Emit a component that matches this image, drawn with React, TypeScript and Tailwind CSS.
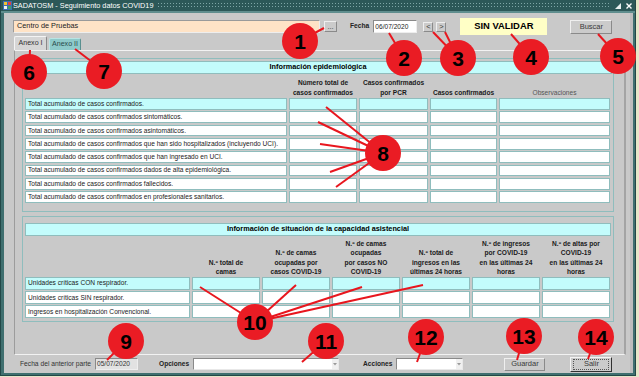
import React from "react"

const epiRows = [
  "Total acumulado de casos confirmados.",
  "Total acumulado de casos confirmados sintomáticos.",
  "Total acumulado de casos confirmados asintomáticos.",
  "Total acumulado de casos confirmados que han sido hospitalizados (incluyendo UCI).",
  "Total acumulado de casos confirmados que han ingresado en UCI.",
  "Total acumulado de casos confirmados dados de alta epidemiológica.",
  "Total acumulado de casos confirmados fallecidos.",
  "Total acumulado de casos confirmados en profesionales sanitarios.",
]

const capRows = [
  "Unidades críticas CON respirador.",
  "Unidades críticas SIN respirador.",
  "Ingresos en hospitalización Convencional.",
]

const capHeaders = [
  ["N.º total de", "camas"],
  ["N.º de camas", "ocupadas por", "casos COVID-19"],
  ["N.º de camas", "ocupadas", "por casos NO", "COVID-19"],
  ["N.º total de", "ingresos en las", "últimas 24 horas"],
  ["N.º de ingresos", "por COVID-19", "en las últimas 24", "horas"],
  ["N.º de altas por", "COVID-19", "en las últimas 24", "horas"],
]

// annotation markers: [cx, cy, label, line endpoints]
const marks: [number, number, string, [number, number][]][] = [
  [300, 41, "1", [[324, 28]]],
  [404, 58, "2", [[389, 33]]],
  [458, 58, "3", [[433, 32], [445, 32]]],
  [531, 57, "4", [[511, 34]]],
  [618, 56, "5", [[598, 34]]],
  [29, 72, "6", [[30, 50]]],
  [104, 71, "7", [[75, 49]]],
  [383, 153, "8", [[326, 107], [318, 122], [320, 144], [330, 172], [336, 187]]],
  [126, 341, "9", [[107, 360]]],
  [255, 322, "10", [[200, 287], [296, 285], [362, 287], [423, 285]]],
  [326, 341, "11", [[302, 362]]],
  [426, 337, "12", [[417, 362]]],
  [524, 336, "13", [[517, 360]]],
  [596, 337, "14", [[588, 359]]],
]

function Cell({ cyan, text }: { cyan?: boolean; text?: string }) {
  return (
    <div
      className={`h-full border border-[#8fbdbd] flex items-center pl-[2px] overflow-hidden whitespace-nowrap text-[6.6px] text-[#1a1a1a] ${
        cyan ? "bg-[#c3fcfc]" : "bg-white"
      }`}
    >
      {text}
    </div>
  )
}

function Button({ label, focused }: { label: string; focused?: boolean }) {
  return (
    <div
      className={`h-full bg-[#cbcbcb] border flex items-center justify-center text-[7.5px] text-[#3a3a3a] ${
        focused
          ? "border-t-[#f4f4f4] border-l-[#f4f4f4] border-r-[#303030] border-b-[#303030]"
          : "border-t-[#efefef] border-l-[#efefef] border-r-[#8a8a8a] border-b-[#8a8a8a]"
      }`}
    >
      <div className={`px-[4px] ${focused ? "border border-dotted border-[#555] w-[36px] h-[11px] flex items-center justify-center" : ""}`}>
        {label}
      </div>
    </div>
  )
}

function Select({ w }: { w: string }) {
  return (
    <div className={`${w} h-[12px] bg-white border border-t-[#8a8a8a] border-l-[#8a8a8a] border-r-[#e8e8e8] border-b-[#e8e8e8] flex justify-end`}>
      <div className="w-[6px] h-full bg-[#f0f0f0] flex items-center justify-center">
        <svg width="4" height="3" viewBox="0 0 4 3">
          <path d="M0 0h4L2 2.5z" fill="#9a9a9a" />
        </svg>
      </div>
    </div>
  )
}

export default function App() {
  return (
    <div className="relative w-[639px] h-[377px] overflow-hidden bg-[#e6e6c8] font-['Liberation_Sans',Arial,sans-serif]">
      {/* Window */}
      <div className="w-[636px] h-[376px] flex flex-col bg-[#3f6f6f] border-l-[1px] border-r-[1px] border-b-[1px] border-[#234848]">
        {/* Title bar */}
        <div className="h-[11px] flex items-center bg-[#2c5858]">
          <svg width="9" height="9" viewBox="0 0 9 9" className="ml-[2px] mr-[1px]">
            <rect x="0" y="0" width="9" height="9" fill="#3b6fb0" />
            <rect x="1" y="1" width="3" height="3" fill="#f2c230" />
            <rect x="5" y="1" width="3" height="3" fill="#e04040" />
            <rect x="1" y="5" width="3" height="3" fill="#f0f0f0" />
            <rect x="5" y="5" width="3" height="3" fill="#40a060" />
          </svg>
          <span className="text-[7.3px] text-white whitespace-nowrap leading-none">SADATOSM - Seguimiento datos COVID19</span>
          <div className="flex-1 h-[7px] mx-[4px] bg-[radial-gradient(circle,#7ea6a6_0.6px,transparent_0.9px)] bg-[length:3px_3px]" />
          <svg width="8" height="8" viewBox="0 0 8 8" className="mr-[3px]">
            <path d="M1 7h6V1z" fill="#e8f0f0" />
          </svg>
          <svg width="8" height="8" viewBox="0 0 8 8" className="mr-[2px]">
            <path d="M1.5 1.5l5 5M6.5 1.5l-5 5" stroke="#ffffff" strokeWidth="1.4" />
          </svg>
        </div>
        <div className="h-[2px] bg-[#5f8e8e]" />

        {/* Content */}
        <div className="flex-1 flex flex-col ml-[3px] mr-[2px] mb-[2px] bg-[#c9c9c9] border-r-[3px] border-[#bdbdbd]">
          {/* Top row */}
          <div className="h-[17px] mt-[5px] flex items-center">
            <div className="ml-[9px] w-[307px] h-[13px] bg-[#ffe3c6] border border-t-[#9a9a9a] border-l-[#9a9a9a] border-r-[#eeeeee] border-b-[#eeeeee] flex items-center pl-[3px] text-[7.3px] text-[#222]">
              Centro de Pruebas
            </div>
            <div className="ml-[4px] w-[13px] h-[11px]">
              <Button label="..." />
            </div>
            <span className="ml-[13px] text-[6.7px] font-bold text-[#222]">Fecha</span>
            <div className="ml-[4px] w-[44px] h-[13px] bg-white border border-t-[#8a8a8a] border-l-[#8a8a8a] border-r-[#eeeeee] border-b-[#eeeeee] flex items-center pl-[1px] text-[6.6px] text-[#222]">
              06/07/2020
            </div>
            <div className="ml-[6px] w-[10px] h-[10px]">
              <Button label="<" />
            </div>
            <div className="ml-[3px] w-[10px] h-[10px]">
              <Button label=">" />
            </div>
            <div className="ml-[14px] w-[87px] h-[17px] bg-[#ffffc6] flex items-center justify-center text-[9.4px] font-bold text-black">
              SIN VALIDAR
            </div>
            <div className="ml-[23px] w-[42px] h-[14px]">
              <Button label="Buscar" />
            </div>
          </div>

          {/* Tabs */}
          <div className="h-[14px] mt-[1px] flex items-end pl-[10px]">
            <div className="w-[33px] h-[14px] bg-[#d6d6d6] border border-b-0 border-t-[#f4f4f4] border-l-[#f4f4f4] border-r-[#8a8a8a] rounded-t-[2px] flex items-center justify-center text-[7.1px] text-[#333]">
              Anexo I
            </div>
            <div className="ml-[2px] w-[32px] h-[12px] bg-[#8ecaca] border border-b-0 border-t-[#b8e4e4] border-l-[#b8e4e4] border-r-[#5a9090] rounded-t-[2px] flex items-center justify-center text-[7.1px] text-[#2a4a4a]">
              Anexo II
            </div>
          </div>

          {/* Tab panel */}
          <div className="ml-[10px] w-[612px] h-[305px] border-t border-t-[#f2f2f2] border-l border-l-[#9c9c9c] border-r-[2px] border-r-[#a4a4a4] border-b border-b-[#f2f2f2] flex flex-col">
            {/* Group 1 */}
            <div className="ml-[7px] mt-[7px] w-[592px] h-[154px] border border-[#8fbdbd] flex flex-col">
              <div className="mt-[2px] mx-[1px] h-[13px] bg-[#c3fcfc] border border-[#8fbdbd] flex items-center justify-center text-[7.3px] font-bold text-black">
                Información epidemiológica
              </div>
              <div className="mx-[2px] h-[24px] grid grid-cols-[262px_68px_69px_67px_111px] gap-x-[2px] items-end text-[6.6px] leading-[9.3px] text-center font-bold text-[#1a1a1a] pb-[1px]">
                <div />
                <div>
                  Número total de
                  <br />
                  casos confirmados
                </div>
                <div>
                  Casos confirmados
                  <br />
                  por PCR
                </div>
                <div>Casos confirmados</div>
                <div className="font-normal text-[#555]">Observaciones</div>
              </div>
              <div className="mx-[2px] grid grid-cols-[262px_68px_69px_67px_111px] auto-rows-[11.64px] gap-x-[2px] gap-y-[1.7px]">
                {epiRows.map((r, i) => (
                  <React.Fragment key={r}>
                    <Cell cyan={i === 0} text={r} />
                    <Cell cyan={i === 0} />
                    <Cell cyan={i === 0} />
                    <Cell cyan={i === 0} />
                    <Cell cyan={i === 0} />
                  </React.Fragment>
                ))}
              </div>
            </div>

            {/* Group 2 */}
            <div className="ml-[7px] mt-[4px] w-[592px] h-[106px] border border-[#8fbdbd] flex flex-col">
              <div className="mt-[6px] mx-[2px] h-[13px] bg-[#c3fcfc] border border-[#8fbdbd] flex items-center justify-center text-[7.3px] font-bold text-black">
                Información de situación de la capacidad asistencial
              </div>
              <div className="mx-[2px] h-[41px] grid grid-cols-[165px_68px_68px_68px_68px_68px_68px] gap-x-[2px] items-end text-[6.6px] leading-[9.2px] text-center font-bold text-[#1a1a1a] pb-[1px]">
                <div />
                {capHeaders.map((h) => (
                  <div key={h.join()}>
                    {h.map((l) => (
                      <div key={l}>{l}</div>
                    ))}
                  </div>
                ))}
              </div>
              <div className="mx-[2px] grid grid-cols-[165px_68px_68px_68px_68px_68px_68px] auto-rows-[12.7px] gap-x-[2px] gap-y-[1.5px]">
                {capRows.map((r, i) => (
                  <React.Fragment key={r}>
                    <Cell cyan={i === 0} text={r} />
                    {[0, 1, 2, 3, 4, 5].map((c) => (
                      <Cell key={c} cyan={i === 0} />
                    ))}
                  </React.Fragment>
                ))}
              </div>
            </div>
          </div>

          {/* Bottom bar */}
          <div className="flex-1 flex items-center pl-[16px]">
            <span className="text-[6.7px] text-[#333]">Fecha del anterior parte</span>
            <div className="ml-[4px] w-[43px] h-[12px] bg-[#e2e2e2] border border-t-[#8a8a8a] border-l-[#8a8a8a] border-r-[#eeeeee] border-b-[#eeeeee] flex items-center pl-[1px] text-[6.6px] text-[#333]">
              05/07/2020
            </div>
            <span className="ml-[21px] text-[6.6px] font-bold text-[#222]">Opciones</span>
            <div className="ml-[4px]">
              <Select w="w-[146px]" />
            </div>
            <span className="ml-[24px] text-[6.6px] font-bold text-[#222]">Acciones</span>
            <div className="ml-[4px]">
              <Select w="w-[67px]" />
            </div>
            <div className="ml-[41px] w-[41px] h-[13px]">
              <Button label="Guardar" />
            </div>
            <div className="ml-[25px] w-[42px] h-[15px]">
              <Button label="Salir" focused />
            </div>
          </div>
        </div>
      </div>

      {/* Annotation overlay */}
      <svg className="absolute inset-0 pointer-events-none" width="639" height="377" viewBox="0 0 639 377">
        {marks.map(([cx, cy, , pts]) =>
          pts.map(([x, y], i) => (
            <line key={`${cx}-${i}`} x1={x} y1={y} x2={cx} y2={cy} stroke="#e8161e" strokeWidth="2" />
          ))
        )}
        {marks.map(([cx, cy, label]) => (
          <g key={label}>
            <circle cx={cx} cy={cy} r="18" fill="#ea1c24" />
            <text
              x={cx}
              y={cy + 7.5}
              textAnchor="middle"
              fontFamily="Liberation Sans, Arial, sans-serif"
              fontWeight="bold"
              fontSize="21"
              fill="#000"
            >
              {label}
            </text>
          </g>
        ))}
      </svg>
    </div>
  )
}
